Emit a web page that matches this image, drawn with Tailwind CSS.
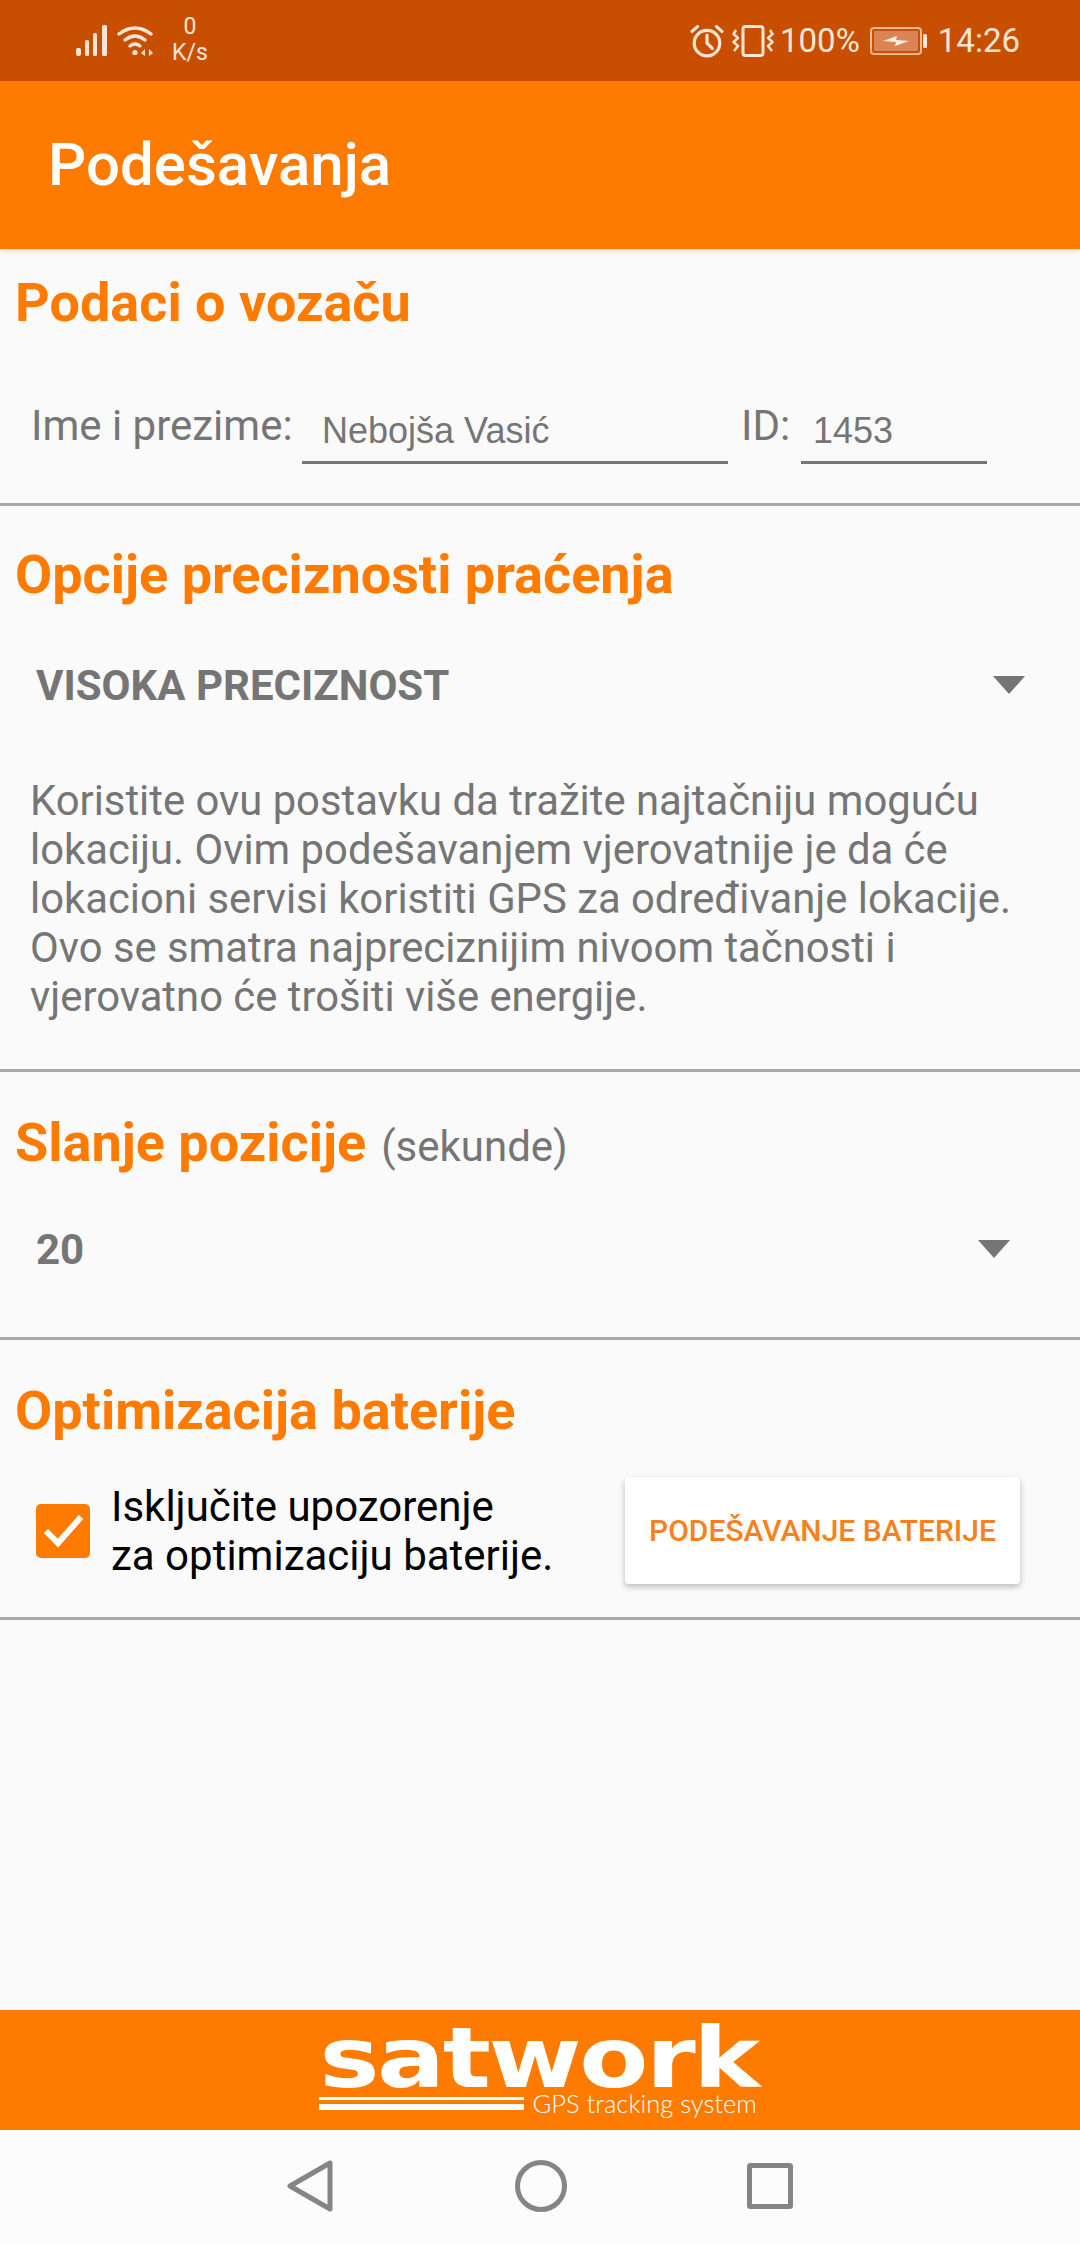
<!DOCTYPE html>
<html><head><meta charset="utf-8"><script src="https://cdn.jsdelivr.net/npm/@tailwindcss/browser@4"></script></head>
<body class="m-0">
<div class="w-[1080px] h-[2244px] flex flex-col bg-[#fafafa] overflow-hidden font-['Roboto',sans-serif]">
  <div class="h-[81px] bg-[#c94f00] flex items-center justify-between pl-[76px] pr-[60px] text-[#fde6d6] shrink-0">
    <div class="flex items-center">
      <svg width="33" height="32" viewBox="0 0 33 32" fill="#fde6d6"><rect x="0" y="23" width="5" height="8" rx="2"/><rect x="9" y="15" width="4" height="16" rx="1.5"/><rect x="17" y="8" width="4" height="23" rx="1.5"/><rect x="26" y="0" width="5" height="31" rx="1.5"/></svg>
      <svg class="ml-[8px]" width="38" height="32" viewBox="0 0 38 32" fill="none" stroke="#fde6d6" stroke-width="3.4" stroke-linecap="round"><path d="M2 9 Q18 -3 34 9"/><path d="M8 15 Q18 7 28 15"/><path d="M13 21 Q18 17 23 21"/><circle cx="18" cy="27.5" r="2.6" fill="#fde6d6" stroke="none"/><path d="M28 24 L24 28 L28 31Z" fill="#fde6d6" stroke="none"/><path d="M32 24 L36 28 L32 31Z" fill="#fde6d6" stroke="none"/></svg>
      <div class="ml-[18px] w-[34px] flex flex-col items-center text-[23px] leading-[26px] mt-[-1px]"><span>0</span><span>K/s</span></div>
    </div>
    <div class="flex items-center">
      <svg width="34" height="34" viewBox="0 0 32 32" fill="none" stroke="#fde6d6" stroke-width="3" stroke-linecap="round"><circle cx="16" cy="18" r="12"/><path d="M16 10.5 V18 L21 23"/><path d="M2 7 L7 2.5"/><path d="M30 7 L25 2.5"/></svg>
      <svg class="ml-[8px]" width="42" height="32" viewBox="0 0 42 32" fill="none" stroke="#fde6d6" stroke-width="3" stroke-linejoin="round"><rect x="11" y="1.5" width="20" height="29" rx="2.5"/><path d="M4 5 L1.5 9 L6 13 L1.5 17 L6 21 L2 26" stroke-width="2.4"/><path d="M38 5 L40.5 9 L36 13 L40.5 17 L36 21 L40 26" stroke-width="2.4"/></svg>
      <span class="ml-[6px] text-[33px] leading-none">100%</span>
      <svg class="ml-[10px]" width="58" height="28" viewBox="0 0 58 28"><rect x="1" y="1" width="50" height="26" rx="3" fill="none" stroke="#eeb795" stroke-width="2"/><rect x="4" y="4" width="44" height="20" fill="#dc8554"/><path d="M13 14 L27 9 L26 13 L39 14 L25 19 L26 15Z" fill="#fdeee4"/><rect x="53" y="7" width="4" height="14" rx="1.5" fill="#fde6d6"/></svg>
      <span class="ml-[10px] text-[33px] leading-none">14:26</span>
    </div>
  </div>
  <div class="relative h-[168px] bg-[#ff7b00] flex items-center pl-[48px] shrink-0 shadow-[0_2px_5px_rgba(0,0,0,0.12)]">
    <h1 class="text-[60px] leading-none font-medium text-white">Podešavanja</h1>
  </div>

  <section class="h-[257px] shrink-0 border-b-[3px] border-[#a9a9a9] pl-[15px] pt-[25px]">
    <h2 class="text-[54px] leading-[58px] font-bold text-[#ff7b00]">Podaci o vozaču</h2>
    <div class="flex items-start pl-[16px] pt-[70px] text-[#757575]">
      <span class="text-[42px] leading-[47px] w-[271px]">Ime i prezime:</span>
      <div class="w-[426px] h-[62px] border-b-[3px] border-[#757575] pl-[20px] pt-[7px] text-[36px] leading-[44px] font-['Liberation_Sans',sans-serif]">Nebojša Vasić</div>
      <span class="ml-[13px] text-[42px] leading-[47px] w-[60px]">ID:</span>
      <div class="w-[186px] h-[62px] border-b-[3px] border-[#757575] pl-[12px] pt-[7px] text-[36px] leading-[44px] font-['Liberation_Sans',sans-serif]">1453</div>
    </div>
  </section>

  <section class="h-[566px] shrink-0 border-b-[3px] border-[#a9a9a9] pl-[15px] pt-[40px]">
    <h2 class="text-[54px] leading-[58px] font-bold text-[#ff7b00]">Opcije preciznosti praćenja</h2>
    <div class="flex items-center justify-between h-[50px] mt-[56px] pl-[21px] pr-[55px] text-[#757575]">
      <span class="text-[42px] font-bold">VISOKA PRECIZNOST</span>
      <svg width="32" height="18" viewBox="0 0 32 18" fill="#757575"><path d="M0 0H32L16 18Z"/></svg>
    </div>
    <p class="mt-[66px] ml-[15px] text-[41.8px] leading-[49px] text-[#757575]">Koristite ovu postavku da tražite najtačniju moguću<br>lokaciju. Ovim podešavanjem vjerovatnije je da će<br>lokacioni servisi koristiti GPS za određivanje lokacije.<br>Ovo se smatra najpreciznijim nivoom tačnosti i<br>vjerovatno će trošiti više energije.</p>
  </section>

  <section class="h-[268px] shrink-0 border-b-[3px] border-[#a9a9a9] pl-[15px] pt-[42px]">
    <h2 class="flex items-baseline text-[54px] leading-[58px] font-bold text-[#ff7b00]">Slanje pozicije<span class="ml-[15px] text-[42px] font-normal text-[#757575]">(sekunde)</span></h2>
    <div class="flex items-center justify-between h-[50px] mt-[48px] pl-[21px] pr-[70px] text-[#757575]">
      <span class="text-[42px] font-bold">20</span>
      <svg width="32" height="18" viewBox="0 0 32 18" fill="#757575"><path d="M0 0H32L16 18Z"/></svg>
    </div>
  </section>

  <section class="h-[280px] shrink-0 border-b-[3px] border-[#a9a9a9] pl-[15px] pt-[42px]">
    <h2 class="text-[54px] leading-[58px] font-bold text-[#ff7b00]">Optimizacija baterije</h2>
    <div class="flex items-center pl-[21px] mt-[37px]">
      <div class="w-[54px] h-[54px] rounded-[5px] bg-[#ff7b00] flex items-center justify-center shrink-0">
        <svg width="44" height="36" viewBox="0 0 44 36" fill="none" stroke="#fff" stroke-width="6"><path d="M5 18 L17 30 L40 4"/></svg>
      </div>
      <p class="ml-[21px] w-[514px] text-[42px] leading-[49px] text-black">Isključite upozorenje<br>za optimizaciju baterije.</p>
      <button class="w-[395px] h-[107px] bg-white rounded-[4px] text-[#f58220] text-[30px] font-medium shadow-[0_3px_6px_rgba(0,0,0,0.25)] shrink-0">PODEŠAVANJE BATERIJE</button>
    </div>
  </section>

  <div class="flex-1"></div>

  <div class="h-[120px] bg-[#ff7b00] shrink-0 flex justify-center">
    <div class="w-[441px] flex flex-col text-white mr-[2px]">
      <div class="h-[78px] flex items-end justify-center">
        <span class="font-['DejaVu_Sans',sans-serif] font-bold text-[84px] leading-[60px] tracking-[-2px] scale-x-[1.2] origin-center">satwork</span>
      </div>
      <div class="flex items-center h-[26px] mt-[2px]">
        <div class="w-[205px] shrink-0 flex flex-col gap-[4px]">
          <div class="h-[3px] bg-white"></div>
          <div class="h-[6px] bg-white"></div>
        </div>
        <span class="ml-[9px] text-[25.5px] leading-[26px] font-light font-['Lato',sans-serif] whitespace-nowrap">GPS tracking system</span>
      </div>
    </div>
  </div>

  <div class="h-[114px] bg-[#fcfcfc] shrink-0 flex items-center justify-center pb-[2px]">
    <svg width="46" height="52" viewBox="0 0 46 52" fill="none" stroke="#858585" stroke-width="5" stroke-linejoin="round"><path d="M43 3 V49 L3 26Z"/></svg>
    <svg class="ml-[182px]" width="52" height="52" viewBox="0 0 52 52" fill="none" stroke="#858585" stroke-width="5"><circle cx="26" cy="26" r="23.5"/></svg>
    <svg class="ml-[180px]" width="46" height="46" viewBox="0 0 46 46" fill="none" stroke="#858585" stroke-width="5" stroke-linejoin="round"><rect x="2.5" y="2.5" width="41" height="41" rx="1"/></svg>
  </div>
</div>
</body></html>
